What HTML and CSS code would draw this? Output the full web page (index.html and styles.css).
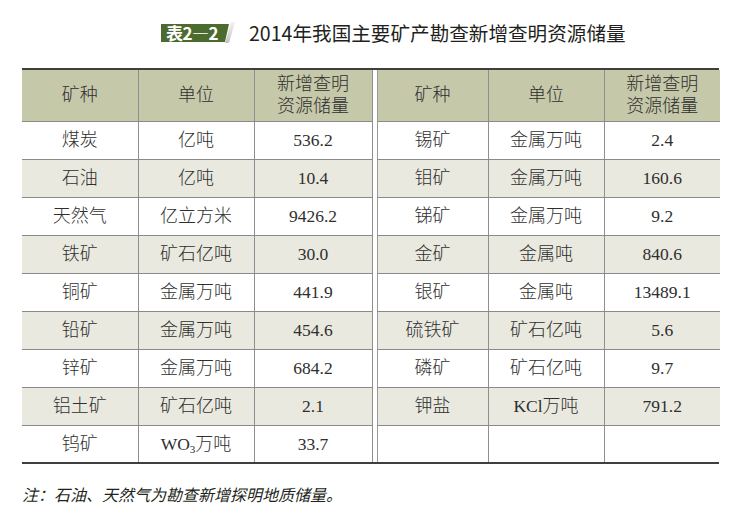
FILE: index.html
```html
<!DOCTYPE html>
<html lang="zh-CN">
<head>
<meta charset="utf-8">
<title>表2—2 2014年我国主要矿产勘查新增查明资源储量</title>
<link rel="stylesheet" href="styles.css">
</head>
<body>
<div class="page">
  <header class="title-bar">
    <div class="badge">表2—2</div>
    <div class="badge-fold"></div>
    <h1 class="title">2014年我国主要矿产勘查新增查明资源储量</h1>
  </header>

  <div class="tables">
    <table class="grid grid-left">
      <colgroup><col class="c1"><col class="c2"><col class="c3"></colgroup>
      <thead>
        <tr><th>矿种</th><th>单位</th><th>新增查明<br>资源储量</th></tr>
      </thead>
      <tbody>
        <tr><td>煤炭</td><td>亿吨</td><td class="num">536.2</td></tr>
        <tr><td>石油</td><td>亿吨</td><td class="num">10.4</td></tr>
        <tr><td>天然气</td><td>亿立方米</td><td class="num">9426.2</td></tr>
        <tr><td>铁矿</td><td>矿石亿吨</td><td class="num">30.0</td></tr>
        <tr><td>铜矿</td><td>金属万吨</td><td class="num">441.9</td></tr>
        <tr><td>铅矿</td><td>金属万吨</td><td class="num">454.6</td></tr>
        <tr><td>锌矿</td><td>金属万吨</td><td class="num">684.2</td></tr>
        <tr><td>铝土矿</td><td>矿石亿吨</td><td class="num">2.1</td></tr>
        <tr><td>钨矿</td><td><span class="lat">WO<sub>3</sub></span>万吨</td><td class="num">33.7</td></tr>
      </tbody>
    </table>
    <table class="grid grid-right">
      <colgroup><col class="c1"><col class="c2"><col class="c3"></colgroup>
      <thead>
        <tr><th>矿种</th><th>单位</th><th>新增查明<br>资源储量</th></tr>
      </thead>
      <tbody>
        <tr><td>锡矿</td><td>金属万吨</td><td class="num">2.4</td></tr>
        <tr><td>钼矿</td><td>金属万吨</td><td class="num">160.6</td></tr>
        <tr><td>锑矿</td><td>金属万吨</td><td class="num">9.2</td></tr>
        <tr><td>金矿</td><td>金属吨</td><td class="num">840.6</td></tr>
        <tr><td>银矿</td><td>金属吨</td><td class="num">13489.1</td></tr>
        <tr><td>硫铁矿</td><td>矿石亿吨</td><td class="num">5.6</td></tr>
        <tr><td>磷矿</td><td>矿石亿吨</td><td class="num">9.7</td></tr>
        <tr><td>钾盐</td><td><span class="lat">KCl</span>万吨</td><td class="num">791.2</td></tr>
        <tr><td></td><td></td><td></td></tr>
      </tbody>
    </table>
  </div>

  <p class="note">注：石油、天然气为勘查新增探明地质储量。</p>
</div>
</body>
</html>
```

FILE: styles.css
```css
* { box-sizing: border-box; }

html, body {
  margin: 0;
  padding: 0;
  background: #ffffff;
}

.page {
  width: 730px;
  height: 519px;
  padding-top: 24px;
}

/* ---------- title ---------- */
.title-bar {
  display: flex;
  align-items: flex-start;
  height: 44px;
  padding-left: 161px;
}

.badge {
  width: 68px;
  height: 18px;
  padding-left: 5px;
  background: #4d6a2f;
  color: #ffffff;
  font-family: "Noto Sans CJK SC", "Liberation Sans", sans-serif;
  font-weight: 700;
  font-size: 17px;
  line-height: 18px;
  letter-spacing: -0.5px;
  clip-path: polygon(0 0, 100% 0, calc(100% - 4px) 100%, 0 100%);
}

.badge-fold {
  width: 4px;
  height: 21px;
  margin-top: -2px;
  margin-left: -1px;
  background: linear-gradient(#f2f2f2, #c4c4c4);
  transform: skewX(-16deg);
}

.title {
  margin: -2px 0 0 17px;
  font-family: "Noto Sans CJK SC", "Liberation Sans", sans-serif;
  font-weight: 400;
  font-size: 19.6px;
  line-height: 22px;
  color: #231f20;
}

/* ---------- tables ---------- */
.tables {
  display: flex;
  gap: 4px;
  width: 697px;
  margin-left: 22px;
  border-top: 2px solid #3f3f3f;
  border-bottom: 2px solid #3f3f3f;
}

.grid {
  border-collapse: collapse;
  table-layout: fixed;
  font-family: "Liberation Serif", "Noto Sans CJK SC", serif;
  font-weight: 300;
  font-size: 18px;
  color: #2f2f2f;
}

.grid-left { width: 350px; }
.grid-right { width: 343px; }

.grid-left .c1 { width: 116px; }
.grid-left .c2 { width: 116px; }
.grid-left .c3 { width: 118px; }

.grid-right .c1 { width: 111px; }
.grid-right .c2 { width: 116px; }
.grid-right .c3 { width: 116px; }

.grid th,
.grid td {
  padding: 0;
  text-align: center;
  vertical-align: middle;
  border-right: 1px solid #8f8f8f;
  border-bottom: 1px solid #8a8a8a;
}

.grid-left th:first-child,
.grid-left td:first-child { border-left: 0; }

.grid-right th:first-child,
.grid-right td:first-child { border-left: 1px solid #9a9a9a; }

.grid-right th:last-child,
.grid-right td:last-child { border-right: 0; }

.grid tbody tr:last-child td { border-bottom: 0; }

.grid th {
  height: 51px;
  background: #c6c8aa;
  font-weight: 300;
  line-height: 22px;
}

.grid td {
  height: 38px;
  line-height: 20px;
}

.grid tbody tr:last-child td { height: 37px; }

.grid tbody tr:nth-child(even) td { background: #e9e9df; }

.num { font-family: "Liberation Serif", serif; font-weight: 400; font-size: 17.5px; }
.lat { font-family: "Liberation Serif", serif; font-weight: 400; font-size: 17.5px; }
.lat sub { font-size: 11px; vertical-align: -3px; line-height: 0; }

/* ---------- note ---------- */
.note {
  margin: 20px 0 0 22px;
  font-family: "Noto Sans CJK SC", "Liberation Sans", sans-serif;
  font-style: italic;
  font-size: 16px;
  line-height: 20px;
  color: #231f20;
}
```
